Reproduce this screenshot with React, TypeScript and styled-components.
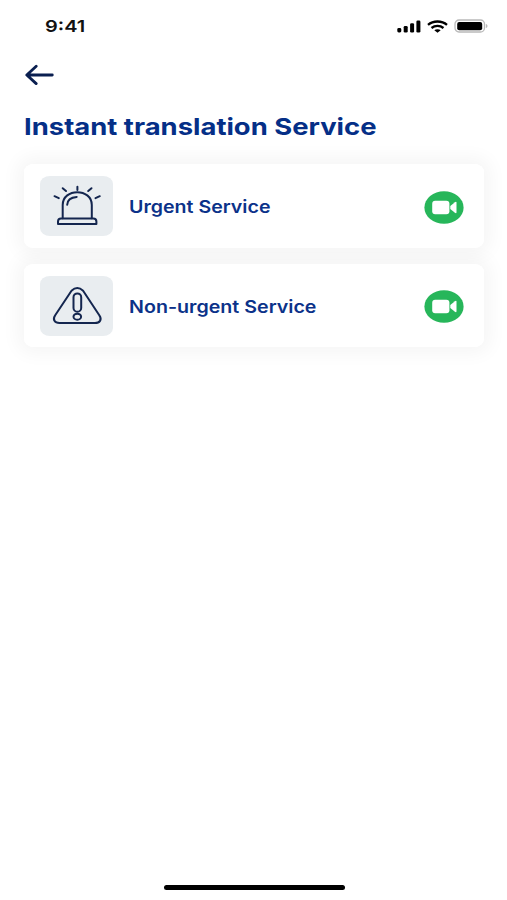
import React from "react";
import styled, { createGlobalStyle } from "styled-components";

const GlobalStyle = createGlobalStyle`
  * { box-sizing: border-box; }
  body { margin: 0; background: #fff; font-family: Inter, "Liberation Sans", sans-serif; }
  svg { display: block; }
`;

const Screen = styled.main`
  width: 507px;
  height: 900px;
  display: flex;
  flex-direction: column;
  background: #fff;
  overflow: hidden;
`;

const StatusBar = styled.header`
  height: 52px;
  padding: 0 19px 0 45px;
  display: flex;
  align-items: center;
  justify-content: space-between;
`;

const WideText = styled.span<{ $stretch: number }>`
  display: inline-block;
  white-space: nowrap;
  transform: scaleX(${(p) => p.$stretch});
  transform-origin: left center;
`;

const Clock = styled.div`
  font-size: 16.5px;
  line-height: 20px;
  font-weight: 600;
  color: #111;
`;

const StatusIcons = styled.div`
  display: flex;
  align-items: center;
  gap: 6px;
`;

const BackButton = styled.button`
  width: 30px;
  height: 22px;
  margin: 12px 0 0 25px;
  padding: 0;
  border: 0;
  background: none;
`;

const Title = styled.h1`
  margin: 27px 0 0 24px;
  font-size: 23.5px;
  line-height: 28px;
  font-weight: 700;
  color: #052f87;
`;

const ServiceList = styled.ul`
  list-style: none;
  margin: 23px 23px 0 24px;
  padding: 0;
  display: flex;
  flex-direction: column;
  gap: 16px;
  position: relative;
  z-index: 0;
`;

const ServiceCard = styled.li`
  height: 83.5px;
  padding: 0 20px 0 16px;
  display: flex;
  align-items: center;
  border-radius: 10px / 8px;
  background: #fff;
  position: relative;

  &::before {
    content: "";
    position: absolute;
    inset: 0;
    z-index: -1;
    border-radius: inherit;
    box-shadow: 0 0 18px 7px rgba(0, 0, 0, 0.04);
  }
`;

const IconTile = styled.div`
  width: 73px;
  height: 60px;
  margin-top: 0.6px;
  display: flex;
  border-radius: 10px / 8px;
  background: #e9edf0;
`;

const Label = styled.div`
  flex: 1;
  margin-left: 16px;
  font-size: 17.2px;
  line-height: 22px;
  font-weight: 600;
  color: #0b3289;
  padding-top: 3px;
`;

const CallButton = styled.button`
  width: 40px;
  height: 33px;
  margin-top: 3px;
  padding: 0;
  border: 0;
  background: none;
`;

const HomeIndicator = styled.div`
  width: 181px;
  height: 5px;
  margin: auto 0 10.5px 164px;
  border-radius: 3px;
  background: #000;
`;

const SignalIcon = () => (
  <svg width="24" height="13" viewBox="0 0 24 13">
    <rect x="0.3" y="8" width="4" height="4.5" rx="1.4" />
    <rect x="6.7" y="6" width="4" height="6.5" rx="1.3" />
    <rect x="13.1" y="3.3" width="4" height="9.2" rx="1.3" />
    <rect x="19.4" y="0.5" width="4" height="12" rx="1.3" />
  </svg>
);

const WifiIcon = () => (
  <svg width="21" height="13" viewBox="0 0 21 13" fill="none" stroke="#000" strokeWidth="2.3">
    <path d="M1 4.8C6.2 .4 14.8 .4 20 4.8" />
    <path d="M4.5 8C8 5.2 13 5.2 16.5 8" />
    <path d="M7.3 10.2C9 8.9 12 8.9 13.7 10.2L10.5 12.8Z" fill="#000" stroke="none" />
  </svg>
);

const BatteryIcon = () => (
  <svg width="34" height="14" viewBox="0 0 34 14">
    <rect x="1" y="1" width="29.5" height="12" rx="4" fill="#fff" stroke="#b9b9b9" strokeWidth="1.3" />
    <rect x="3.2" y="2.9" width="25" height="8.3" rx="2" />
    <path d="M31.9 5C34 5.5 34 8.5 31.9 9Z" fill="#b9b9b9" />
  </svg>
);

const BackIcon = () => (
  <svg width="30" height="22" viewBox="0 0 30 22" fill="none" stroke="#0a1f50" strokeWidth="2.8" strokeLinecap="round" strokeLinejoin="round">
    <path d="M27.3 11H2M11.2 2.3L1.8 11L11.2 19.6" />
  </svg>
);

const SirenIcon = () => (
  <svg width="73" height="60" viewBox="0 0 73 60" fill="none" stroke="#14264f" strokeWidth="2" strokeLinecap="round" strokeLinejoin="round">
    <path d="M22.7 42.3V29C22.7 11.9 51.8 11.9 51.8 29V42.3" />
    <path d="M27.2 28.7C27.4 24.3 31 21.3 36.7 20.9" />
    <path d="M21 42.5H53.3Q56.4 42.5 56.4 45.5V48.1H18V45.5Q18 42.5 21 42.5Z" />
    <path d="M37.4 10.8V14.1M22.7 12.2L26 15M51.5 12.2L48.2 15M14.5 20.2L18.8 22.1M59.8 20.2L55.5 22.1" />
  </svg>
);

const WarningIcon = () => (
  <svg width="73" height="60" viewBox="0 0 73 60" fill="none" stroke="#14264f" strokeWidth="2" strokeLinecap="round" strokeLinejoin="round">
    <path d="M31.5 14.7Q37.3 9.3 43.1 14.7L59.3 39.3C62.4 43.8 59.6 47 55 47H19.4C14.8 47 12.2 43.8 15.2 39.3Z" />
    <rect x="33.5" y="17.4" width="7.7" height="18.3" rx="3.8" />
    <ellipse cx="37.3" cy="40.7" rx="3.8" ry="3" />
  </svg>
);

const VideoIcon = () => (
  <svg width="40" height="33" viewBox="0 0 40 33">
    <ellipse cx="20" cy="16.5" rx="19.6" ry="16.3" fill="#27b65a" />
    <rect x="8.2" y="9.7" width="17.2" height="13.6" rx="3" fill="#fff" />
    <path d="M26.3 15L30.9 11.2Q32.5 10.2 32.5 11.8V21.2Q32.5 22.8 30.9 21.8L26.3 18Z" fill="#fff" />
  </svg>
);

const services = [
  { name: "Urgent Service", stretch: 1.14, Icon: SirenIcon },
  { name: "Non-urgent Service", stretch: 1.143, Icon: WarningIcon },
];

export default function App() {
  return (
    <Screen>
      <GlobalStyle />
      <StatusBar>
        <Clock><WideText $stretch={1.21}>9:41</WideText></Clock>
        <StatusIcons><SignalIcon /><WifiIcon /><BatteryIcon /></StatusIcons>
      </StatusBar>
      <BackButton aria-label="Back"><BackIcon /></BackButton>
      <Title><WideText $stretch={1.167}>Instant translation Service</WideText></Title>
      <ServiceList>
        {services.map(({ name, stretch, Icon }) => (
          <ServiceCard key={name}>
            <IconTile><Icon /></IconTile>
            <Label><WideText $stretch={stretch}>{name}</WideText></Label>
            <CallButton aria-label={`Video call: ${name}`}><VideoIcon /></CallButton>
          </ServiceCard>
        ))}
      </ServiceList>
      <HomeIndicator />
    </Screen>
  );
}
